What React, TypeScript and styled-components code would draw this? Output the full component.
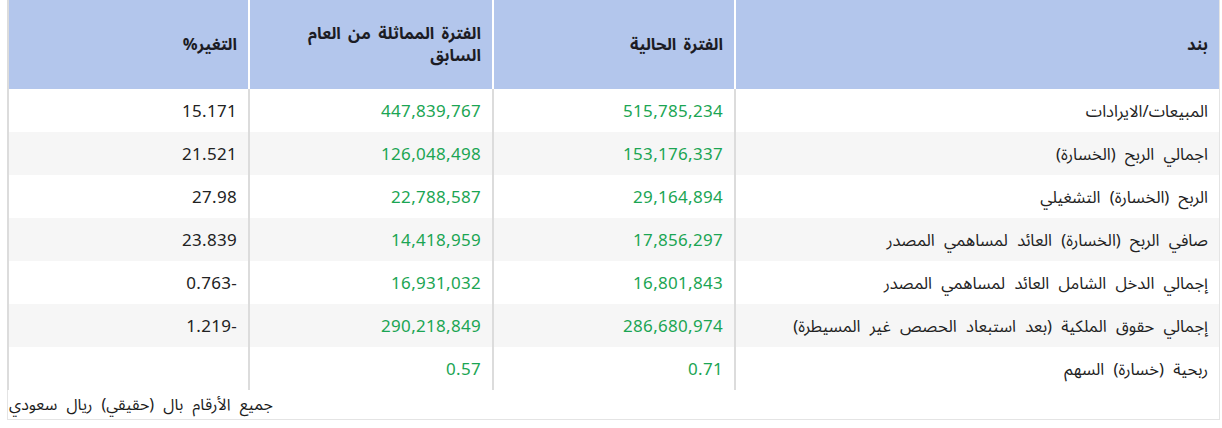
import React from "react";
import styled, { createGlobalStyle } from "styled-components";

const GlobalStyle = createGlobalStyle`
  html, body { margin: 0; padding: 0; background: #ffffff; }
  body {
    font-family: "Noto Sans Arabic", "Noto Sans", "DejaVu Sans", sans-serif;
    color: #222222;
  }
`;

const Wrapper = styled.div`
  margin: 0 2px 0 7px;
  width: 1211px;
  border: 1px solid #e4e4e4;
  border-top: none;
  direction: rtl;
`;

const Table = styled.table`
  width: 1211px;
  border-collapse: collapse;
  table-layout: fixed;
`;

const Col = styled.col<{ $w: number }>`
  width: ${(p) => p.$w}px;
`;

const HeadCell = styled.th`
  height: 89px;
  background: #b3c6ec;
  color: #1c1c24;
  font-size: 16.5px;
  font-weight: 700;
  line-height: 22px;
  word-spacing: 3px;
  text-align: right;
  vertical-align: middle;
  padding: 0 11px 0 16px;
  border-left: 2px solid #ffffff;
  &:last-child { border-left: 2px solid #dcdcdc; }
`;

const Row = styled.tr<{ $alt?: boolean }>`
  background: ${(p) => (p.$alt ? "#f6f6f6" : "#ffffff")};
`;

const Cell = styled.td<{ $num?: boolean; $green?: boolean }>`
  box-sizing: border-box;
  height: 43px;
  padding: 2px 11px 0 11px;
  font-size: ${(p) => (p.$num ? "17px" : "16.5px")};
  letter-spacing: ${(p) => (p.$num ? "0.3px" : "0")};
  word-spacing: 5px;
  line-height: 22px;
  text-align: right;
  vertical-align: middle;
  color: ${(p) => (p.$green ? "#1ba553" : "#222222")};
  border-left: 2px solid #dcdcdc;
  white-space: nowrap;
`;

const Footer = styled.div`
  text-align: left;
  font-size: 16px;
  word-spacing: 5px;
  line-height: 27px;
  padding: 2px 0 0 1px;
  color: #1c1c1c;
  & > span { display: inline-block; }
`;

const rows: [string, string, string, string][] = [
  ["المبيعات/الايرادات", "515,785,234", "447,839,767", "15.171"],
  ["اجمالي الربح (الخسارة)", "153,176,337", "126,048,498", "21.521"],
  ["الربح (الخسارة) التشغيلي", "29,164,894", "22,788,587", "27.98"],
  ["صافي الربح (الخسارة) العائد لمساهمي المصدر", "17,856,297", "14,418,959", "23.839"],
  ["إجمالي الدخل الشامل العائد لمساهمي المصدر", "16,801,843", "16,931,032", "-0.763"],
  ["إجمالي حقوق الملكية (بعد استبعاد الحصص غير المسيطرة)", "286,680,974", "290,218,849", "-1.219"],
  ["ربحية (خسارة) السهم", "0.71", "0.57", ""],
];

export default function App() {
  return (
    <>
      <GlobalStyle />
      <Wrapper>
        <Table>
          <colgroup>
            <Col $w={484} />
            <Col $w={242} />
            <Col $w={244} />
            <Col $w={241} />
          </colgroup>
          <thead>
            <tr>
              <HeadCell>بند</HeadCell>
              <HeadCell>الفترة الحالية</HeadCell>
              <HeadCell>الفترة المماثلة من العام السابق</HeadCell>
              <HeadCell>التغير%</HeadCell>
            </tr>
          </thead>
          <tbody>
            {rows.map((r, i) => (
              <Row key={i} $alt={i % 2 === 1}>
                <Cell>{r[0]}</Cell>
                <Cell $num $green>{r[1]}</Cell>
                <Cell $num $green>{r[2]}</Cell>
                <Cell $num>{r[3]}</Cell>
              </Row>
            ))}
          </tbody>
        </Table>
        <Footer>
          <span>جميع الأرقام بال (حقيقي) ريال سعودي</span>
        </Footer>
      </Wrapper>
    </>
  );
}
